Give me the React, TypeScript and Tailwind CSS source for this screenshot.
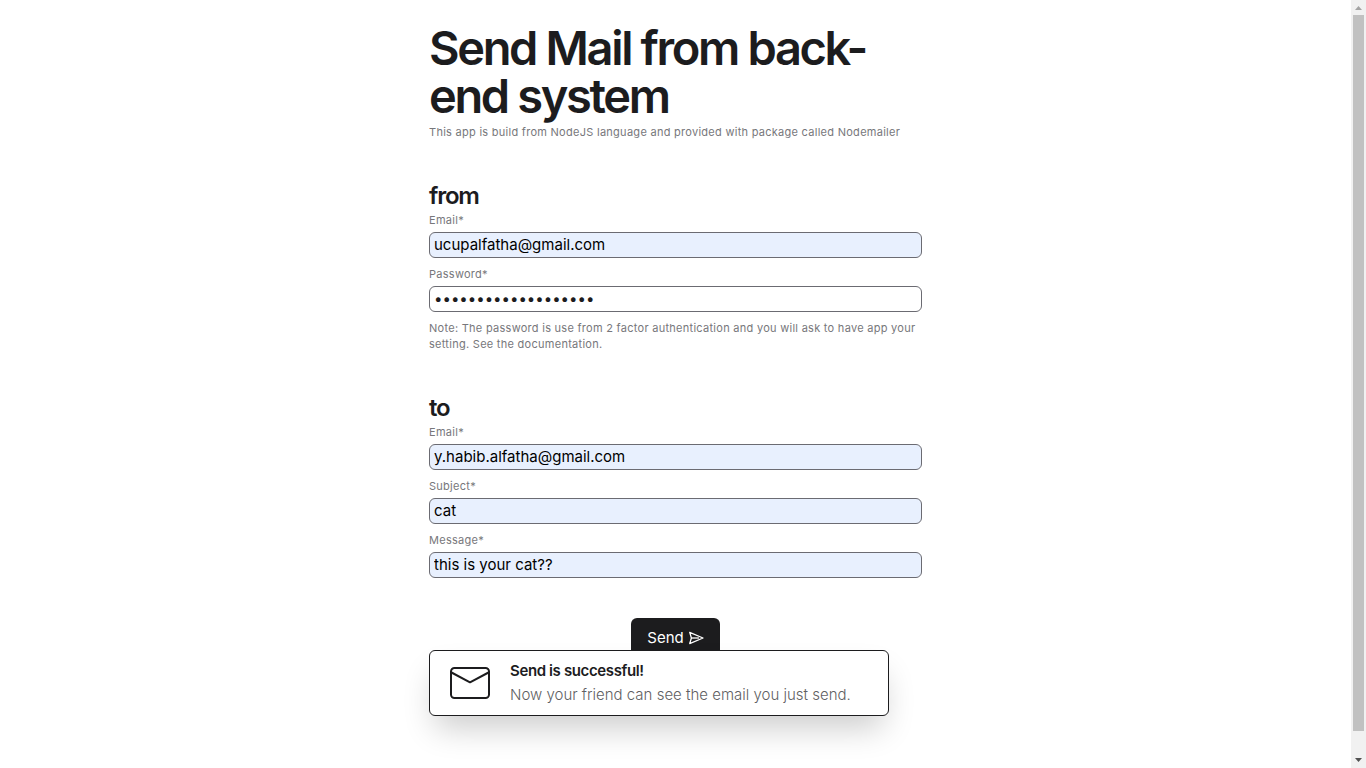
import { useId } from "react";

type FieldProps = {
  label: string;
  type?: string;
  value: string;
  filled?: boolean;
};

function Field({ label, type = "text", value, filled = true }: FieldProps) {
  const id = useId();
  return (
    <div className="flex flex-col gap-1">
      <label htmlFor={id} className="text-[11px] leading-4 tracking-wide text-[#77777b]">
        {label}*
      </label>
      <input
        id={id}
        type={type}
        defaultValue={value}
        className={
          filled
            ? "h-[26px] w-full rounded-md border border-[#6b6b72] bg-[#e8f0fe] px-1 pb-0.5 text-[15px] text-black"
            : "h-[26px] w-full rounded-md border border-[#6b6b72] bg-white px-1 pb-0.5 text-[15px] text-[#1c1c1e]"
        }
      />
    </div>
  );
}

function SendIcon() {
  return (
    <svg
      viewBox="0 0 16 16"
      className="size-4"
      fill="none"
      stroke="currentColor"
      strokeWidth="1.300"
      strokeLinejoin="round"
      aria-hidden="true"
    >
      <path d="M1.700 2.400 15 8 1.700 13.600 3.400 8z" />
      <path d="M3.400 8H11" />
    </svg>
  );
}

function Toast() {
  return (
    <div
      role="status"
      className="absolute top-8 left-0 flex w-[460px] items-center gap-5 rounded-md border border-[#1c1c1e] bg-white px-5 py-2 shadow-[0_18px_32px_-6px_rgba(0,0,0,0.2)]"
    >
      <svg
        viewBox="0 0 40 32"
        className="h-8 w-10 shrink-0 text-[#1c1c1e]"
        fill="none"
        stroke="currentColor"
        strokeWidth="2"
        strokeLinecap="round"
        strokeLinejoin="round"
        aria-hidden="true"
      >
        <rect x="1" y="1" width="38" height="30" rx="3.5" />
        <path d="M1.5 5.500 20 15.300l18.500-9.800" />
      </svg>
      <div className="text-[15px] leading-6">
        <p className="font-semibold tracking-tight text-[#1c1c1e]">Send is successful!</p>
        <p className="font-light text-[#5f5f63]">Now your friend can see the email you just send.</p>
      </div>
    </div>
  );
}

function ScrollTrack() {
  return (
    <div aria-hidden="true" className="flex w-[15px] shrink-0 flex-col items-center bg-[#f1f1f1]">
      <svg viewBox="0 0 15 15" className="size-[15px]" fill="#a3a3a3">
        <path d="M4 10h7L7.500 6z" />
      </svg>
      <div className="w-[11px] grow bg-[#c1c1c1]" />
      <div className="h-[22px]" />
      <svg viewBox="0 0 15 15" className="size-[15px]" fill="#505050">
        <path d="M4 5h7L7.500 9z" />
      </svg>
    </div>
  );
}

export default function App() {
  return (
    <div className="flex h-screen overflow-hidden bg-white font-['Inter',sans-serif] text-[#1c1c1e]">
      <main className="grow">
        <form
          className="mx-auto flex w-full max-w-[493px] flex-col gap-10 pt-6"
          onSubmit={(event) => event.preventDefault()}
        >
          <header>
            <h1 className="text-[47px] leading-12 font-semibold tracking-tighter">
              Send Mail from back-end system
            </h1>
            <p className="mt-1 text-[11px] leading-4 tracking-wide text-[#77777b]">
              This app is build from NodeJS language and provided with package called Nodemailer
            </p>
          </header>

          <section>
            <h2 className="text-2xl font-semibold tracking-tighter">from</h2>
            <div className="flex flex-col gap-2">
              <Field label="Email" type="email" value="ucupalfatha@gmail.com" />
              <Field label="Password" type="password" value="abcdefghijklmnopqrs" filled={false} />
              <p className="text-[11px] leading-4 tracking-wide text-[#77777b]">
                Note: The password is use from 2 factor authentication and you will ask to have app
                your setting. See the documentation.
              </p>
            </div>
          </section>

          <section>
            <h2 className="text-2xl font-semibold tracking-tighter">to</h2>
            <div className="flex flex-col gap-2">
              <Field label="Email" type="email" value="y.habib.alfatha@gmail.com" />
              <Field label="Subject" value="cat" />
              <Field label="Message" value="this is your cat??" />
            </div>
          </section>

          <div className="relative flex justify-center">
            <button
              type="submit"
              className="flex h-10 items-center gap-1 rounded-md bg-[#1c1c1e] px-4 text-[15px] text-white"
            >
              Send
              <SendIcon />
            </button>
            <Toast />
          </div>
        </form>
      </main>
      <ScrollTrack />
    </div>
  );
}
